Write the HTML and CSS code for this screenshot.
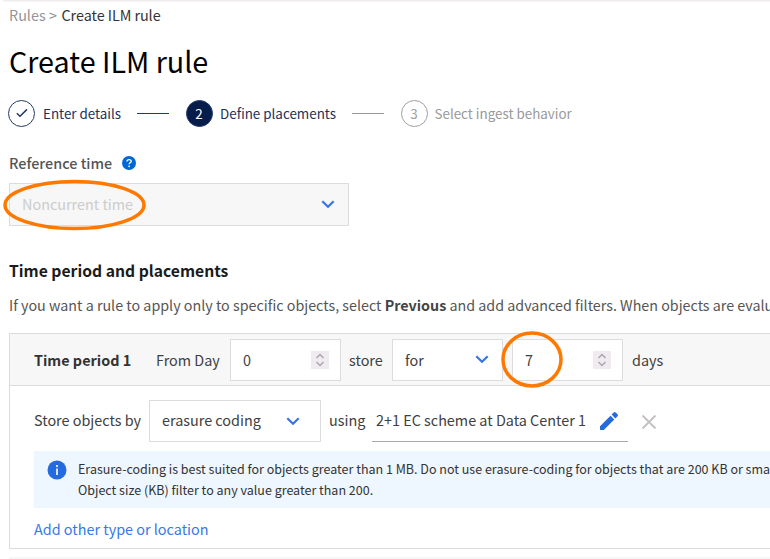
FILE: index.html
```html
<!DOCTYPE html>
<html lang="en">
<head>
<meta charset="utf-8">
<title>Create ILM rule</title>
<link rel="stylesheet" href="styles.css">
</head>
<body>
<main class="page">
  <nav class="breadcrumb"><span class="crumb">Rules &gt; </span><span class="current">Create ILM rule</span></nav>
  <h1 class="title"><span>Create ILM rule</span></h1>
  <div class="stepper">
    <span class="dot done"><svg width="14" height="12" viewBox="0 0 14 12"><path d="M1.8 6.2 5 9.2 12 2.4"/></svg></span>
    <span class="label s1">Enter details</span>
    <i class="bar bar1"></i>
    <span class="dot active">2</span>
    <span class="label s2">Define placements</span>
    <i class="bar bar2"></i>
    <span class="dot next">3</span>
    <span class="label s3">Select ingest behavior</span>
  </div>
  <div class="ref-label"><span class="ref-text">Reference time</span>
    <svg width="14" height="14" viewBox="0 0 14 14"><circle cx="7" cy="7" r="7" fill="#0067d9"/><path d="M5 5.6C5 3 9.2 3 9.2 5.4 9.2 6.8 7.1 6.8 7.1 8.3" fill="none" stroke="#fff" stroke-width="1.4"/><circle cx="7.1" cy="10.3" r=".9" fill="#fff"/></svg>
  </div>
  <div class="field select reference"><span class="ref-value">Noncurrent time</span><svg class="chev" width="14" height="9" viewBox="0 0 14 9"><path d="M1.3 1.2 7 6.8 12.7 1.2"/></svg>
    <svg class="ring ring-time" width="144" height="54" viewBox="0 0 144 54"><ellipse cx="71.5" cy="27" rx="69.5" ry="23.6"/></svg>
  </div>
  <h2 class="section"><span>Time period and placements</span></h2>
  <p class="intro"><span>If you want a rule to apply only to specific objects, select </span><b>Previous</b><span> and add advanced filters. When objects are evalu</span></p>
  <section class="card">
    <header class="period">
      <b class="period-name">Time period 1</b>
      <span class="from">From Day</span>
      <div class="field number n1"><span>0</span><svg class="spin" width="18" height="18" viewBox="0 0 18 18"><path d="M5.5 7 9 3.5 12.5 7M5.5 11 9 14.5 12.5 11"/></svg></div>
      <span class="store">store</span>
      <div class="field select for"><span class="for-value">for</span><svg class="chev" width="14" height="9" viewBox="0 0 14 9"><path d="M1.3 1.2 7 6.8 12.7 1.2"/></svg></div>
      <div class="field number n2"><span>7</span><svg class="spin" width="18" height="18" viewBox="0 0 18 18"><path d="M5.5 7 9 3.5 12.5 7M5.5 11 9 14.5 12.5 11"/></svg>
        <svg class="ring ring-days" width="64" height="60" viewBox="0 0 64 60"><ellipse cx="32" cy="29.5" rx="29" ry="26.4"/></svg>
      </div>
      <span class="days">days</span>
    </header>
    <div class="placement">
      <span class="by">Store objects by</span>
      <div class="field select coding"><span class="coding-value">erasure coding</span><svg class="chev" width="14" height="9" viewBox="0 0 14 9"><path d="M1.3 1.2 7 6.8 12.7 1.2"/></svg></div>
      <span class="using">using</span>
      <div class="scheme"><span class="scheme-value">2+1 EC scheme at Data Center 1</span>
        <svg width="20" height="20" viewBox="0 0 20 20" fill="#256be0"><path d="M1 15.2 11.5 4.7 15.3 8.5 4.8 19H1zM12.6 3.6 14.7 1.5Q15.7.5 16.7 1.5L18.5 3.3Q19.5 4.3 18.5 5.3L16.4 7.4z"/></svg>
      </div>
      <svg class="remove" width="16" height="16" viewBox="0 0 16 16"><path d="M1.5 1.5 14.5 14.5M14.5 1.5 1.5 14.5"/></svg>
    </div>
    <div class="note">
      <svg width="20" height="20" viewBox="0 0 20 20"><circle cx="10" cy="10" r="9.5" fill="#256be0"/><path d="M9 5h2v2H9zM9 8.4h2V15H9z" fill="#d5e4fb"/></svg>
      <div class="note-text"><span>Erasure-coding is best suited for objects greater than 1 MB. Do not use erasure-coding for objects that are 200 KB or sma</span><span>Object size (KB) filter to any value greater than 200.</span></div>
    </div>
    <a class="add">Add other type or location</a>
  </section>
</main>
</body>
</html>
```

FILE: styles.css
```css
* { box-sizing: border-box; }
body { margin: 0; height: 559px; overflow: hidden; background: #fff; color: #404040; font: 14.4px/20px "Noto Sans CJK SC", "Noto Sans", sans-serif; }
svg { display: block; flex: none; }
b, h1, h2 { margin: 0; }
span, b, a { white-space: pre; }
.page { width: 770px; height: 559px; overflow: hidden; padding-left: 9px; background: linear-gradient(#f0ecec, #f0ecec) 3px 0 / 100% 1.5px no-repeat, linear-gradient(#f8f6f6, #f8f6f6) 9px 557px / 100% 2px no-repeat; }
.breadcrumb { padding-top: 5px; height: 25px; color: #333; }
.crumb { display: inline-block; width: 52.5px; color: #949494; }
.current { letter-spacing: -0.06px; }
.title { margin-top: 16px; height: 40px; font-size: 28.7px; line-height: 40px; font-weight: 400; color: #000; }
.stepper { display: flex; align-items: center; height: 28px; margin-top: 18px; margin-left: -1px; color: #1b315c; font-size: 13.4px; }
.dot { width: 27px; height: 27px; border-radius: 50%; border: 1px solid #233a66; display: flex; align-items: center; justify-content: center; flex: none; }
.dot svg { fill: none; stroke: #233a66; stroke-width: 1.5; }
.active { background: #061d4c; color: #fff; }
.next { border-color: #a0a0a0; color: #a0a0a0; }
.label { margin-left: 8px; flex: none; }
.s1 { width: 94px; }
.s2 { width: 132px; margin-left: 7.5px; }
.s3 { color: #999; margin-left: 7px; }
.bar { width: 32px; height: 1px; background: #1f3d66; flex: none; }
.bar1 { margin-right: 16.5px; }
.bar2 { background: #999; margin-right: 16.5px; }
.ref-label { display: flex; align-items: center; height: 20px; margin-top: 26px; }
.ref-text { width: 112.5px; font-weight: 500; color: #555; }
.field { position: relative; display: flex; align-items: center; justify-content: space-between; height: 42px; border: 1px solid #dcdcdc; background: #fff; flex: none; }
.select { padding: 0 13px 0 12px; }
.chev { fill: none; stroke: #3874e4; stroke-width: 2.2; }
.reference { width: 340px; height: 43px; margin-top: 10px; background: #f7f7f7; color: #ccc; }
.ref-value { position: relative; top: -1px; }
.ring { position: absolute; fill: none; stroke: #ff7900; stroke-width: 3.5; }
.ring-time { left: -7px; top: -6px; }
.section { margin-top: 35px; height: 20px; font-size: 15.7px; line-height: 20px; color: #1b1b1b; }
.intro { margin: 14px 0 0; height: 20px; white-space: nowrap; font-size: 14.3px; color: #555; }
.intro b { color: #444; }
.card { margin-top: 18px; height: 216px; border: 1px solid #dcdcdc; border-right: 0; }
.period { display: flex; align-items: center; height: 52px; padding-left: 24px; background: #f7f7f7; border-bottom: 1px solid #dcdcdc; }
.period-name { width: 122px; color: #333; }
.from { width: 74px; }
.number { width: 111px; padding: 0 11px 0 12px; }
.spin { background: #efebef; fill: none; stroke: #aaa6b2; stroke-width: 1.5; }
.store { width: 43px; margin-left: 8px; }
.for { width: 111px; }
.n2 { margin-left: 9px; }
.ring-days { left: -13px; top: -10px; }
.days { margin-left: 9px; }
.placement { display: flex; align-items: center; height: 42px; margin-top: 14px; padding-left: 24px; }
.by { width: 115px; }
.coding { width: 172px; padding-right: 20px; }
.using { width: 43px; margin-left: 8px; }
.by, .coding-value, .using { padding-bottom: 2px; }
.scheme-value { padding-bottom: 1px; }
.scheme { display: flex; align-items: center; width: 256px; height: 42px; padding-left: 4px; border-bottom: 1px solid #aaa; }
.scheme-value { width: 223px; }
.remove { margin: 2px 0 0 13px; stroke: #c4c0c0; stroke-width: 1.8; }
.note { display: flex; height: 57px; margin: 9px 0 0 24px; padding: 9px 0 0 13px; background: #eef7ff; font-size: 12.5px; color: #333; }
.note-text { margin-left: 11px; }
.note-text span { display: block; height: 21px; line-height: 17px; }
.add { display: block; margin: 11px 0 0 24px; color: #3878ea; }
```
